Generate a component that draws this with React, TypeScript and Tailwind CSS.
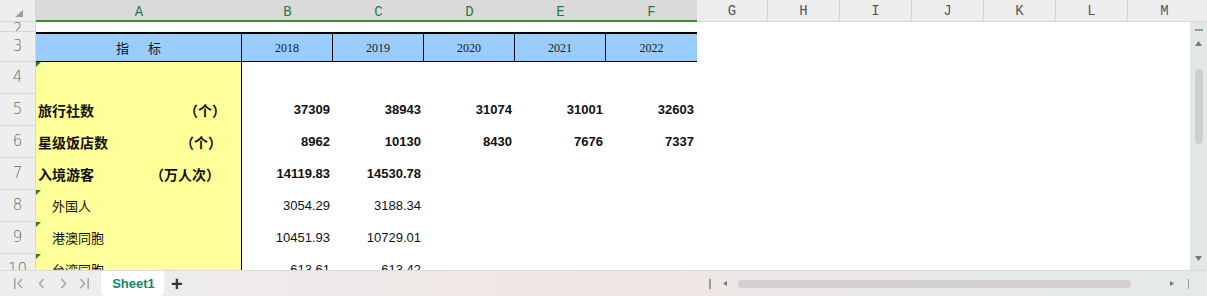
import React from "react";

const CJK = { fontFamily: '"Noto Sans CJK SC", "Noto Sans", sans-serif' };
const ARIAL = { fontFamily: '"Liberation Sans", Arial, sans-serif' };
const SERIF = { fontFamily: '"Liberation Serif", "Times New Roman", serif' };
const MONO = { fontFamily: '"Liberation Mono", "Courier New", monospace' };
const ROWNUM = { fontFamily: '"DejaVu Sans", "Noto Sans", sans-serif' };

const dataW = [91, 91, 91, 91, 91];
const greyCols = [
  { l: "G", w: 71 },
  { l: "H", w: 72 },
  { l: "I", w: 72 },
  { l: "J", w: 72 },
  { l: "K", w: 72 },
  { l: "L", w: 72 },
];

type Row = {
  n: number;
  label?: string;
  unit?: string;
  pr?: number;
  bold?: boolean;
  indent?: boolean;
  tri?: boolean;
  vals: string[];
};

const rows: Row[] = [
  { n: 4, tri: true, vals: [] },
  { n: 5, label: "旅行社数", unit: "（个）", pr: 15, bold: true, vals: ["37309", "38943", "31074", "31001", "32603"] },
  { n: 6, label: "星级饭店数", unit: "（个）", pr: 19, bold: true, vals: ["8962", "10130", "8430", "7676", "7337"] },
  { n: 7, label: "入境游客", unit: "（万人次）", pr: 21, bold: true, vals: ["14119.83", "14530.78"] },
  { n: 8, label: "外国人", indent: true, tri: true, vals: ["3054.29", "3188.34"] },
  { n: 9, label: "港澳同胞", indent: true, tri: true, vals: ["10451.93", "10729.01"] },
  { n: 10, label: "台湾同胞", indent: true, tri: true, vals: ["613.61", "613.42"] },
];

function RowHead({ n, h, top }: { n: number; h: string; top?: boolean }) {
  return (
    <div
      className={`w-[36px] shrink-0 ${h} bg-[#eeeeee] border-r border-b border-[#d6d6d6] flex justify-center overflow-hidden text-[15px] font-light text-[#6a6a6a] leading-none ${
        top ? "items-start pt-0" : "items-center"
      }`}
      style={ROWNUM}
    >
      {n}
    </div>
  );
}

function Tri() {
  return (
    <div className="absolute left-0 top-0 w-0 h-0 border-t-[5px] border-r-[5px] border-t-[#1d7d2a] border-r-transparent" />
  );
}

export default function App() {
  return (
    <div className="w-[1207px] h-[296px] flex flex-col overflow-hidden bg-white select-none">
      {/* column header */}
      <div className="h-[22px] shrink-0 flex">
        <div className="w-[36px] shrink-0 bg-[#eeeeee] border-r border-b border-[#d6d6d6] relative">
          <svg className="absolute left-[15px] top-[10px]" width="8" height="7" viewBox="0 0 8 7">
            <polygon points="8,0 8,7 0,7" fill="#9a9a9a" />
          </svg>
        </div>
        <div
          className="w-[206px] shrink-0 bg-[#dadada] border-b-2 border-[#3f8c2c] flex items-center justify-center pt-[4px] text-[14px] text-[#1f7a4a]"
          style={MONO}
        >
          A
        </div>
        {["B", "C", "D", "E", "F"].map((l, i) => (
          <div
            key={l}
            className="shrink-0 bg-[#dadada] border-b-2 border-[#3f8c2c] flex items-center justify-center pt-[4px] text-[14px] text-[#1f7a4a]"
            style={{ ...MONO, width: dataW[i] }}
          >
            {l}
          </div>
        ))}
        {greyCols.map((c) => (
          <div
            key={c.l}
            className="shrink-0 bg-[#eeeeee] border-r border-b border-[#d6d6d6] flex items-center justify-center pt-[2px] text-[14px] text-[#555555]"
            style={{ ...MONO, width: c.w }}
          >
            {c.l}
          </div>
        ))}
        <div
          className="flex-1 bg-[#eeeeee] border-b border-[#d6d6d6] flex items-center justify-center pt-[2px] pr-[6px] text-[14px] text-[#555555]"
          style={MONO}
        >
          M
        </div>
      </div>

      {/* body */}
      <div className="flex-1 flex min-h-0">
        <div className="flex-1 flex flex-col overflow-hidden">
          {/* row 2 */}
          <div className="h-[10px] shrink-0 flex">
            <RowHead n={2} h="h-[10px]" top />
            <div className="w-[661px] shrink-0" />
          </div>
          {/* row 3 */}
          <div className="h-[30px] shrink-0 flex">
            <RowHead n={3} h="h-[30px]" />
            <div
              className="w-[206px] shrink-0 bg-[#99ccff] border-t-2 border-b border-r border-black flex items-center justify-center gap-[19px] text-[13px] text-[#111]"
              style={CJK}
            >
              <span>指</span>
              <span>标</span>
            </div>
            {["2018", "2019", "2020", "2021", "2022"].map((y, i) => (
              <div
                key={y}
                className={`shrink-0 bg-[#99ccff] border-t-2 border-b border-black flex items-center justify-center text-[12px] text-[#1a1a1a] ${
                  i < 4 ? "border-r" : ""
                }`}
                style={{ ...SERIF, width: dataW[i] }}
              >
                {y}
              </div>
            ))}
          </div>
          {rows.map((r) => (
            <div key={r.n} className="h-[32px] shrink-0 flex">
              <RowHead n={r.n} h="h-[32px]" />
              <div
                className={`relative w-[206px] shrink-0 bg-[#ffff99] border-r border-black flex items-center justify-between text-[#111] ${
                  r.bold ? "font-bold text-[14px]" : "text-[13px]"
                } ${r.indent ? "pl-[16px]" : "pl-[2px]"}`}
                style={{ ...CJK, paddingRight: r.pr ?? 0 }}
              >
                {r.tri && <Tri />}
                {r.label && <span>{r.label}</span>}
                {r.unit && <span>{r.unit}</span>}
              </div>
              {dataW.map((w, i) => (
                <div
                  key={i}
                  className={`shrink-0 flex items-center justify-end pr-[3px] text-[13px] text-[#111] ${
                    r.bold ? "font-bold" : ""
                  }`}
                  style={{ ...ARIAL, width: w }}
                >
                  {r.vals[i] ?? ""}
                </div>
              ))}
            </div>
          ))}
        </div>

        {/* vertical scrollbar */}
        <div className="w-[17px] shrink-0 bg-[#e2e8e8] flex flex-col items-center">
          <div className="mt-[7px] w-[8px] h-[1.5px] bg-[#9a9a9a]" />
          <svg className="mt-[10px]" width="7" height="5" viewBox="0 0 7 5">
            <polygon points="3.5,0 7,5 0,5" fill="#7a7a7a" />
          </svg>
          <div className="mt-[23px] w-[8px] h-[75px] rounded-full bg-[#cbd0d0]" />
          <div className="flex-1" />
          <svg className="mb-[9px]" width="7" height="5" viewBox="0 0 7 5">
            <polygon points="0,0 7,0 3.5,5" fill="#7a7a7a" />
          </svg>
        </div>
      </div>

      {/* tab bar */}
      <div className="h-[26px] shrink-0 flex items-start border-t border-[#dcdcdc] bg-linear-to-r from-[#eeeeee] via-[#efe6e5] to-[#e3eaea]">
        <div className="h-[25px] flex items-center pl-[14px] gap-0">
          <svg width="10" height="11" viewBox="0 0 10 11">
            <rect x="0" y="0" width="1.6" height="11" fill="#a8a8a8" />
            <polyline points="8,1 4,5.5 8,10" fill="none" stroke="#a8a8a8" strokeWidth="1.6" />
          </svg>
          <svg className="ml-[14px]" width="7" height="11" viewBox="0 0 7 11">
            <polyline points="5.5,1 1.5,5.5 5.5,10" fill="none" stroke="#a8a8a8" strokeWidth="1.6" />
          </svg>
          <svg className="ml-[15px]" width="7" height="11" viewBox="0 0 7 11">
            <polyline points="1.5,1 5.5,5.5 1.5,10" fill="none" stroke="#a8a8a8" strokeWidth="1.6" />
          </svg>
          <svg className="ml-[12px]" width="10" height="11" viewBox="0 0 10 11">
            <polyline points="1.5,1 5.5,5.5 1.5,10" fill="none" stroke="#a8a8a8" strokeWidth="1.6" />
            <rect x="8.4" y="0" width="1.6" height="11" fill="#a8a8a8" />
          </svg>
        </div>
        <div
          className="ml-[12px] w-[63px] h-[25px] bg-white rounded-b-[5px] flex items-center justify-center pl-[2px] text-[13px] font-bold text-[#17876a]"
          style={ARIAL}
        >
          Sheet1
        </div>
        <div className="ml-[7px] h-[25px] flex items-center text-[20px] font-bold text-[#333] leading-none" style={ARIAL}>
          +
        </div>
        <div className="flex-1" />
        <div className="h-[25px] flex items-center">
          <div className="w-[1.5px] h-[10px] bg-[#9a9a9a]" />
          <svg className="ml-[12px]" width="4" height="5" viewBox="0 0 4 5">
            <polygon points="4,0 4,5 0,2.5" fill="#777" />
          </svg>
          <div className="ml-[11px] w-[393px] h-[8px] rounded-full bg-[#d2cfce]" />
          <svg className="ml-[39px]" width="4" height="5" viewBox="0 0 4 5">
            <polygon points="0,0 0,5 4,2.5" fill="#777" />
          </svg>
          <div className="ml-[14px] mr-[18px] w-[1.5px] h-[10px] bg-[#9a9a9a]" />
        </div>
      </div>
    </div>
  );
}
